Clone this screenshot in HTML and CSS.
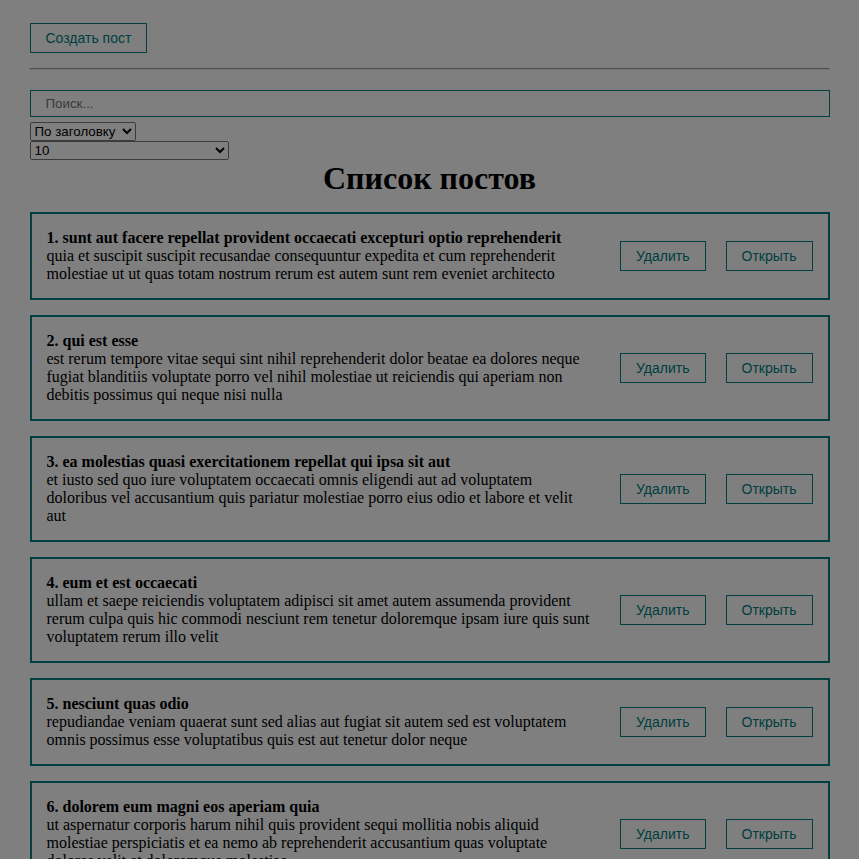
FILE: index.html
```html
<!DOCTYPE html>
<html lang="ru">
<head>
<meta charset="utf-8">
<title>Посты</title>
<link rel="stylesheet" href="styles.css">
</head>
<body>
<div class="app">
  <div class="toolbar">
    <button class="my-btn">Создать пост</button>
  </div>
  <hr class="divider">
  <input class="my-input" type="text" placeholder="Поиск...">
  <div class="filters">
    <select class="my-select sort-select">
      <option disabled>Сортировка</option>
      <option selected>По заголовку</option>
      <option>По описанию</option>
    </select>
    <select class="my-select limit-select">
      <option disabled>Кол-во элементов на странице</option>
      <option>5</option>
      <option selected>10</option>
      <option>25</option>
      <option>Показать все</option>
    </select>
  </div>
  <h1 class="list-title">Список постов</h1>
  <div class="post-list">
    <div class="post">
      <div class="post-content">
        <strong>1. sunt aut facere repellat provident occaecati excepturi optio reprehenderit</strong>
        <div>quia et suscipit suscipit recusandae consequuntur expedita et cum reprehenderit molestiae ut ut quas totam nostrum rerum est autem sunt rem eveniet architecto</div>
      </div>
      <div class="post-btns"><button class="my-btn">Удалить</button><button class="my-btn">Открыть</button></div>
    </div>
    <div class="post">
      <div class="post-content">
        <strong>2. qui est esse</strong>
        <div>est rerum tempore vitae sequi sint nihil reprehenderit dolor beatae ea dolores neque fugiat blanditiis voluptate porro vel nihil molestiae ut reiciendis qui aperiam non debitis possimus qui neque nisi nulla</div>
      </div>
      <div class="post-btns"><button class="my-btn">Удалить</button><button class="my-btn">Открыть</button></div>
    </div>
    <div class="post">
      <div class="post-content">
        <strong>3. ea molestias quasi exercitationem repellat qui ipsa sit aut</strong>
        <div>et iusto sed quo iure voluptatem occaecati omnis eligendi aut ad voluptatem doloribus vel accusantium quis pariatur molestiae porro eius odio et labore et velit aut</div>
      </div>
      <div class="post-btns"><button class="my-btn">Удалить</button><button class="my-btn">Открыть</button></div>
    </div>
    <div class="post">
      <div class="post-content">
        <strong>4. eum et est occaecati</strong>
        <div>ullam et saepe reiciendis voluptatem adipisci sit amet autem assumenda provident rerum culpa quis hic commodi nesciunt rem tenetur doloremque ipsam iure quis sunt voluptatem rerum illo velit</div>
      </div>
      <div class="post-btns"><button class="my-btn">Удалить</button><button class="my-btn">Открыть</button></div>
    </div>
    <div class="post">
      <div class="post-content">
        <strong>5. nesciunt quas odio</strong>
        <div>repudiandae veniam quaerat sunt sed alias aut fugiat sit autem sed est voluptatem omnis possimus esse voluptatibus quis est aut tenetur dolor neque</div>
      </div>
      <div class="post-btns"><button class="my-btn">Удалить</button><button class="my-btn">Открыть</button></div>
    </div>
    <div class="post">
      <div class="post-content">
        <strong>6. dolorem eum magni eos aperiam quia</strong>
        <div>ut aspernatur corporis harum nihil quis provident sequi mollitia nobis aliquid molestiae perspiciatis et ea nemo ab reprehenderit accusantium quas voluptate dolores velit et doloremque molestiae</div>
      </div>
      <div class="post-btns"><button class="my-btn">Удалить</button><button class="my-btn">Открыть</button></div>
    </div>
  </div>
</div>
<div class="modal-backdrop"></div>
</body>
</html>
```

FILE: styles.css
```css
body {
  margin: 8px;
  font-family: "Liberation Serif", "Times New Roman", serif;
  font-size: 16px;
  color: #000;
  background: #fff;
}

.app {
  width: 800px;
  margin: 0 auto;
}

.toolbar {
  display: flex;
  padding-top: 15px;
}

.my-btn {
  padding: 5px 15px;
  color: teal;
  font-family: "Liberation Sans", Arial, sans-serif;
  font-size: 14px;
  line-height: 18px;
  background: transparent;
  border: 1px solid teal;
  cursor: pointer;
}

.divider {
  margin: 15px 0;
}

.my-input {
  display: block;
  box-sizing: border-box;
  width: 100%;
  height: 27px;
  padding: 5px 15px;
  margin: 20px 0 5px;
  border: 1px solid teal;
  font-family: "Liberation Sans", Arial, sans-serif;
  font-size: 13.333px;
  background: #fff;
}

.filters {
  display: flex;
  flex-direction: column;
  align-items: flex-start;
}

.my-select {
  font-family: "Liberation Sans", Arial, sans-serif;
  font-size: 13.333px;
}

.sort-select {
  width: 106px;
}

.limit-select {
  width: 199px;
}

.list-title {
  text-align: center;
  font-size: 32px;
  margin: 0;
}

.post {
  display: flex;
  justify-content: space-between;
  align-items: center;
  padding: 15px;
  border: 2px solid teal;
  margin-top: 15px;
}

.post-btns {
  display: flex;
  flex-shrink: 0;
  gap: 20px;
  margin-left: 28px;
}

.modal-backdrop {
  position: fixed;
  inset: 0;
  background: rgba(0, 0, 0, 0.5);
}
```
